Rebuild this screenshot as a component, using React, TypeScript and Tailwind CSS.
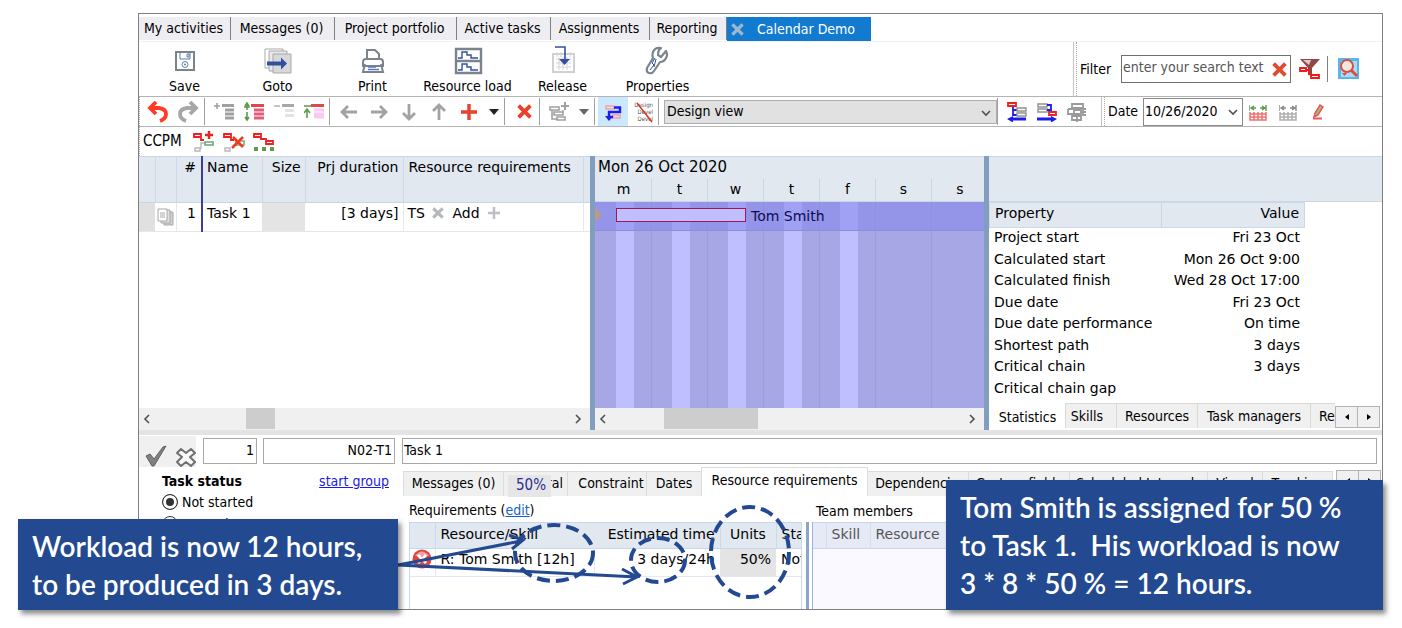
import React from "react";

const mainTabs = [
  { label: "My activities", width: "w-[92px]" },
  { label: "Messages (0)", width: "w-[104px]" },
  { label: "Project portfolio", width: "w-[122px]" },
  { label: "Active tasks", width: "w-[94px]" },
  { label: "Assignments", width: "w-[99px]" },
  { label: "Reporting", width: "w-[77px]" },
];

const stats = [
  ["Project start", "Fri 23 Oct"],
  ["Calculated start", "Mon 26 Oct 9:00"],
  ["Calculated finish", "Wed 28 Oct 17:00"],
  ["Due date", "Fri 23 Oct"],
  ["Due date performance", "On time"],
  ["Shortest path", "3 days"],
  ["Critical chain", "3 days"],
  ["Critical chain gap", ""],
];

const days = ["m", "t", "w", "t", "f", "s", "s"];

interface IconProps {
  size?: number;
  children: React.ReactNode;
}

const Icon: React.FC<IconProps> = ({ size = 20, children }) => (
  <svg
    width={size}
    height={size}
    viewBox={`0 0 ${size} ${size}`}
    fill="none"
    className="shrink-0"
    aria-hidden="true"
  >
    {children}
  </svg>
);

const Sep = () => <div className="w-px self-stretch bg-[#a0a0a0] my-px shrink-0" />;

const Grip = () => (
  <div className="w-1 self-stretch border-l border-[#c4c4c4] shrink-0 flex justify-end">
    <div className="border-l border-dotted border-[#a8a8a8]" />
  </div>
);

const ToolButton: React.FC<{
  label: string;
  active?: boolean;
  children: React.ReactNode;
}> = ({ label, active, children }) => (
  <button
    aria-label={label}
    className={
      active
        ? "w-[30px] h-[29px] shrink-0 flex items-center justify-center bg-[#cce8ff]"
        : "w-[30px] h-[29px] shrink-0 flex items-center justify-center"
    }
  >
    {children}
  </button>
);

const Caret: React.FC<{ color: string }> = ({ color }) => (
  <button aria-label="More" className="w-5 h-[29px] shrink-0 flex items-center justify-center">
    <Icon size={10}>
      <path d="M0 2h10L5 8z" fill={color} />
    </Icon>
  </button>
);

const BigButton: React.FC<{
  label: string;
  first?: boolean;
  children: React.ReactNode;
}> = ({ label, first, children }) => (
  <button
    className={
      first
        ? "w-[91px] flex flex-col items-center whitespace-nowrap pt-1"
        : "w-[95px] flex flex-col items-center whitespace-nowrap pt-1"
    }
  >
    {children}
    <span className="leading-5">{label}</span>
  </button>
);

const Cross: React.FC<{ color: string; size?: number }> = ({ color, size = 14 }) => (
  <svg width={size} height={size} viewBox="0 0 14 14" fill="none" className="shrink-0" aria-hidden="true">
    <path d="M1.5 1.5L12.5 12.5M12.5 1.5L1.5 12.5" stroke={color} strokeWidth="3.600" />
  </svg>
);

const Chevron: React.FC<{ d: string; color?: string }> = ({ d, color = "#505050" }) => (
  <Icon size={10}>
    <path d={d} stroke={color} strokeWidth="1.6" />
  </Icon>
);

const ScrollBar: React.FC<{ children: React.ReactNode }> = ({ children }) => (
  <div className="h-[22px] bg-[#f0f0f0] flex items-center justify-between pl-[3px] pr-[7px] relative">
    <Chevron d="M7 1L3 5L7 9" />
    {children}
    <Chevron d="M3 1L7 5L3 9" />
  </div>
);

const TabArrows = () => (
  <div className="flex h-[22px] w-[45px] shrink-0">
    <button
      aria-label="Scroll tabs left"
      className="flex-1 bg-[#f0f0f0] border border-[#b4b4b4] flex items-center justify-center"
    >
      <Icon size={8}>
        <path d="M6 1v6L2 4z" fill="#000" />
      </Icon>
    </button>
    <button
      aria-label="Scroll tabs right"
      className="flex-1 bg-[#f0f0f0] border border-l-0 border-[#b4b4b4] flex items-center justify-center"
    >
      <Icon size={8}>
        <path d="M2 1v6l4-3z" fill="#000" />
      </Icon>
    </button>
  </div>
);

const MainTabs = () => (
  <nav className="flex h-[25px] mt-[3px] border-b border-[#f2f2f2]">
    {mainTabs.map((tab) => (
      <button
        key={tab.label}
        className={`${tab.width} h-[23px] bg-[#eeeef2] border-r border-[#808080] pr-[2px] whitespace-nowrap shrink-0`}
      >
        {tab.label}
      </button>
    ))}
    <button className="w-[144px] h-6 bg-[#127bd0] text-white flex items-center gap-[13px] pl-1 whitespace-nowrap shrink-0">
      <Cross color="#9db8cc" size={13} />
      Calendar Demo
    </button>
  </nav>
);

const MainToolbar = () => (
  <div className="flex h-[55px] border-b border-[#b4b4b4]">
    <BigButton label="Save" first>
      <Icon size={30}>
        <rect x="6" y="6" width="18" height="18" stroke="#7b838c" strokeWidth="2" />
        <path d="M10 6v7h10V6M17 8v3h2V8z" stroke="#5f78b0" />
        <circle cx="15" cy="18.500" r="3" stroke="#5f78b0" />
        <circle cx="15" cy="18.500" r="1" fill="#5f78b0" />
      </Icon>
    </BigButton>
    <BigButton label="Goto">
      <Icon size={30}>
        <path d="M2 3h18v19H2z" fill="#fff" stroke="#a9a9a9" />
        <path d="M6 5h18v20H6z" fill="#e8e8e8" stroke="#a9a9a9" />
        <path d="M10 8h18v19H10z" fill="#d6d9da" stroke="#a9a9a9" />
        <path d="M4 15.500h14v-4l6 6-6 6v-4H4z" fill="#3350a0" />
      </Icon>
    </BigButton>
    <BigButton label="Print">
      <Icon size={30}>
        <path d="M9 13V4h8l4 4v5" stroke="#7b838c" strokeWidth="2" />
        <path d="M7 20H5v-4q0-3 3-3h14q3 0 3 3v4H5" stroke="#7b838c" strokeWidth="2" />
        <path d="M7 18l-2 8h20l-2-8" stroke="#7b838c" strokeWidth="2" />
        <path d="M10 21h8M10 23.500h11" stroke="#5f78c0" strokeWidth="1.500" />
      </Icon>
    </BigButton>
    <BigButton label="Resource load">
      <Icon size={30}>
        <path d="M3 3h25v24H3zM3 15h25" stroke="#7b838c" strokeWidth="2.400" />
        <path
          d="M5 12h4V6h5v3h4v3h7M5 24h4v-6h5v3h4v3h7"
          stroke="#3350a0"
          strokeWidth="1.400"
        />
      </Icon>
    </BigButton>
    <BigButton label="Release">
      <Icon size={30}>
        <path d="M5 8h21v18H5z" fill="#fff" stroke="#d0d0d0" strokeWidth="2" />
        <path d="M8 13h15M8 17h15M8 21h15M11 11v13M15 11v13M19 11v13M9 6v5M13 6v5M22 6v5" stroke="#d4d4d4" />
        <path d="M7 1h10v13" stroke="#3350a0" strokeWidth="1.600" />
        <path d="M11 13h11l-5.500 6z" fill="#3350a0" />
      </Icon>
    </BigButton>
    <BigButton label="Properties">
      <Icon size={30}>
        <path
          d="M18 2q-6-1-8 4-1 3 0 6l-6 10q-1 4 2 5 3 1 5-2l6-9q4 0 6-4 2-3 0-7l-5 6-3-2q0-5 3-7z"
          stroke="#7b838c"
          strokeWidth="2.200"
          strokeLinejoin="round"
        />
        <path d="M12 12l-3 5 2 2-4 5M13 13l-2 8" stroke="#3350a0" />
      </Icon>
    </BigButton>
    <div className="flex-1" />
    <Grip />
    <div className="flex items-center w-[305px] shrink-0">
      <label htmlFor="filter" className="w-[44px] pl-[3px]">
        Filter
      </label>
      <div className="w-[170px] h-[28px] border border-[#707070] flex items-center">
        <input
          id="filter"
          placeholder="enter your search text"
          className="w-[150px] pl-px pb-1 outline-none placeholder:text-[#555555]"
        />
        <Cross color="#e04b32" size={15} />
      </div>
      <button aria-label="Apply filter" className="ml-2 flex">
        <Icon size={22}>
          <path d="M1 1h20l-8 9v9l-4-3v-6z" fill="#8b4a4a" />
          <path d="M4 2h8l-2 5z" fill="#e8c4c4" />
          <path d="M1 10h6v3H1zM12 17h8v3h-8z" fill="#fff" />
          <path d="M1 10h6v3H1zM12 17h8v3h-8zM7 12h3v5" stroke="#f01818" strokeWidth="1.800" />
        </Icon>
      </button>
      <div className="w-px h-[26px] bg-[#808080] ml-[6px]" />
      <button aria-label="Search" className="ml-[10px] flex">
        <Icon size={22}>
          <path d="M0 0h21v21H0z" fill="#5cb4ea" />
          <path d="M3 3h16v16H3z" fill="#a9dcf8" />
          <circle cx="9" cy="8" r="6" fill="#f6e6e0" stroke="#d8503e" strokeWidth="2" />
          <path d="M13 12l6 6" stroke="#d8503e" strokeWidth="3" />
          <path d="M4 15h5l-2.500 3z" fill="#d8503e" />
        </Icon>
      </button>
    </div>
  </div>
);

const OutlineToolbar = () => (
  <div className="flex items-center h-[30px] border-b border-[#b4b4b4]">
    <div className="w-1 shrink-0 self-stretch border-l border-dotted border-[#a8a8a8]" />
    <ToolButton label="Undo">
      <Icon size={22}>
        <path d="M9 1L3 7l6 6M3 7h9q7 1 7 6 0 5-6 7" stroke="#ff3b24" strokeWidth="3.800" />
      </Icon>
    </ToolButton>
    <ToolButton label="Redo">
      <Icon size={22}>
        <path d="M13 1l6 6-6 6M19 7h-9q-7 1-7 6 0 5 6 7" stroke="#a6a6a6" strokeWidth="3.800" />
      </Icon>
    </ToolButton>
    <div className="w-px" />
    <Sep />
    <div className="w-1 shrink-0" />
    <ToolButton label="Insert task">
      <Icon>
        <path d="M0 4h6M3 1v6" stroke="#a0a0a0" strokeWidth="1.600" />
        <path d="M8 3.500h12M11 8h9M11 12h9M11 16h9" stroke="#a0a0a0" strokeWidth="3" />
      </Icon>
    </ToolButton>
    <ToolButton label="Expand all">
      <Icon>
        <path d="M3 2v6M0 5h6M3 10v8M1 15l2 3 2-3M1 4l2-3 2 3" stroke="#5b9a4b" strokeWidth="1.600" />
        <path d="M7 3.500h13" stroke="#e04848" strokeWidth="3" />
        <path d="M10 8h10M10 12h10M10 16h10" stroke="#e85a78" strokeWidth="3" />
      </Icon>
    </ToolButton>
    <ToolButton label="Collapse">
      <Icon>
        <path d="M0 4h6" stroke="#b8b8b8" strokeWidth="1.600" />
        <path d="M8 3.500h12" stroke="#a8a8a8" strokeWidth="3" />
        <path d="M11 8.500h9M11 13.500h9" stroke="#e4e4e4" strokeWidth="3" />
      </Icon>
    </ToolButton>
    <ToolButton label="Move up level">
      <Icon>
        <path d="M0 4h7M3 8v8M0 11l3-4 3 4" stroke="#5b9a4b" strokeWidth="1.600" />
        <path d="M7 3.500h13" stroke="#e04848" strokeWidth="3" />
        <path d="M10 8h10M10 12h10M10 15h10" stroke="#fbc8f4" strokeWidth="3" />
      </Icon>
    </ToolButton>
    <Sep />
    <div className="w-1 shrink-0" />
    <ToolButton label="Left">
      <Icon>
        <path d="M18 10H3M9 4l-6 6 6 6" stroke="#a3a3a3" strokeWidth="2.800" />
      </Icon>
    </ToolButton>
    <ToolButton label="Right">
      <Icon>
        <path d="M2 10h15M11 4l6 6-6 6" stroke="#a3a3a3" strokeWidth="2.800" />
      </Icon>
    </ToolButton>
    <ToolButton label="Down">
      <Icon>
        <path d="M10 2v15M4 11l6 6 6-6" stroke="#a3a3a3" strokeWidth="2.800" />
      </Icon>
    </ToolButton>
    <ToolButton label="Up">
      <Icon>
        <path d="M10 18V3M4 9l6-6 6 6" stroke="#a3a3a3" strokeWidth="2.800" />
      </Icon>
    </ToolButton>
    <ToolButton label="Add">
      <Icon>
        <path d="M10 2v16M2 10h16" stroke="#e8412c" strokeWidth="3.400" />
      </Icon>
    </ToolButton>
    <Caret color="#222" />
    <Sep />
    <div className="w-1 shrink-0" />
    <ToolButton label="Delete">
      <Cross color="#e8412c" size={15} />
    </ToolButton>
    <Sep />
    <div className="w-1 shrink-0" />
    <ToolButton label="Add link">
      <Icon>
        <path d="M1 5h9v3H1zM5 10h9v3H5zM8 15h8v3H8zM3 8v9h5M14 8v3" stroke="#a0a0a0" strokeWidth="1.600" />
        <path d="M16 0v8M12 4h8" stroke="#a0a0a0" strokeWidth="2" />
      </Icon>
    </ToolButton>
    <Caret color="#666" />
    <Sep />
    <div className="w-[3px] shrink-0" />
    <ToolButton label="Dependencies" active>
      <Icon>
        <path d="M3 4h8v3H3zM10 13h7v3h-7z" stroke="#f8a0a0" strokeWidth="1.600" />
        <path d="M11 5.500h6v4.500H6v5h4" stroke="#1c1cf0" strokeWidth="2.400" />
        <path d="M2 14h8l-4 5z" fill="#1c1cf0" />
      </Icon>
    </ToolButton>
    <ToolButton label="Hide details">
      <svg width="22" height="22" viewBox="0 0 22 22" aria-hidden="true">
        <g fontSize="6" fill="#555555" textAnchor="end">
          <text x="21" y="6">Design</text>
          <text x="21" y="13">Devel</text>
          <text x="21" y="20">Devel</text>
        </g>
        <path d="M5 2L20 21" stroke="#e03020" strokeWidth="1.500" />
      </svg>
    </ToolButton>
    <Sep />
    <div className="relative flex-1 min-w-0 h-[24px] ml-[5px]">
      <select
        aria-label="View"
        className="appearance-none w-full h-full bg-[#e1e1e1] border border-[#adadad] pl-[2px] outline-none"
      >
        <option>Design view</option>
      </select>
      <div className="absolute right-[6px] top-2 pointer-events-none">
        <Chevron d="M1 3L5 7L9 3" />
      </div>
    </div>
    <Sep />
    <div className="w-1 shrink-0" />
    <ToolButton label="Predecessors">
      <Icon>
        <path d="M6 5v8h4M6 8h4" stroke="#1c1cf0" strokeWidth="1.800" />
        <path d="M1 1h8v3H1z" stroke="#f02020" strokeWidth="1.800" />
        <path d="M10 6h9v3h-9zM10 11h9v3h-9z" stroke="#909090" strokeWidth="1.400" />
        <path d="M19 15.500v3H6v2L0 17l6-3v1.500z" fill="#1c1cf0" />
      </Icon>
    </ToolButton>
    <ToolButton label="Successors">
      <Icon>
        <path d="M1 2h9v3H1zM1 7h9v3H1z" stroke="#909090" strokeWidth="1.400" />
        <path d="M10 3h4v8M10 8h4" stroke="#1c1cf0" strokeWidth="1.800" />
        <path d="M12 10h7v3h-7z" stroke="#f02020" strokeWidth="1.800" />
        <path d="M0 15.500v3h14v2l6-3.500-6-3v1.500z" fill="#1c1cf0" />
      </Icon>
    </ToolButton>
    <ToolButton label="Network">
      <Icon>
        <path
          d="M5 2h11v4H5zM7 8h7v4H7zM5 14h9v4H5zM1 7h4V4M19 7h-3v6h3M1 7v5h4v3M1 12h6M14 10h5M10 12v8"
          stroke="#9a9a9a"
          strokeWidth="1.800"
        />
      </Icon>
    </ToolButton>
    <div className="w-[9px] shrink-0" />
    <Grip />
    <label htmlFor="date" className="w-[38px] shrink-0 pl-[3px]">
      Date
    </label>
    <div className="relative w-[100px] h-[28px] shrink-0">
      <select
        id="date"
        className="appearance-none w-full h-full bg-white border border-[#8a8a8a] pl-px outline-none"
      >
        <option>10/26/2020</option>
      </select>
      <div className="absolute right-[5px] top-[9px] pointer-events-none">
        <Chevron d="M1 3L5 7L9 3" />
      </div>
    </div>
    <ToolButton label="Fit calendar">
      <Icon size={18}>
        <path d="M1 9v8h16V9M1 11h16M1 14h16M5 9v8M9 9v8M13 9v8" stroke="#f07070" strokeWidth="1.500" />
        <path d="M0 2v6M17 2v6M2 5h5M11 5h5M5 3L2 5l3 2M13 3l3 2-3 2" stroke="#5b9a4b" strokeWidth="1.400" />
      </Icon>
    </ToolButton>
    <ToolButton label="Calendar range">
      <Icon size={18}>
        <path d="M1 9v8h16V9M1 11h16M1 14h16M5 9v8M9 9v8M13 9v8" stroke="#b0b0b0" strokeWidth="1.500" />
        <path d="M0 2v6M17 2v6M2 5h5M11 5h5M5 3L2 5l3 2M13 3l3 2-3 2" stroke="#888888" strokeWidth="1.400" />
      </Icon>
    </ToolButton>
    <ToolButton label="Edit">
      <Icon size={18}>
        <path d="M5 14l1-4 5-8 3 2-5 8z" fill="#8dc870" stroke="#f05060" strokeWidth="1.500" />
        <path d="M4 15.500h9" stroke="#f05060" strokeWidth="2" />
      </Icon>
    </ToolButton>
    <div className="w-[49px] shrink-0" />
  </div>
);

const CcpmBar = () => (
  <div className="flex items-center h-[29px]">
    <div className="w-1 shrink-0 self-stretch border-l border-dotted border-[#a8a8a8]" />
    <span className="w-[46px] text-[15px]">CCPM</span>
    <ToolButton label="Add chain">
      <Icon size={22}>
        <path d="M1 3h7v3H1zM8 5v4h3" stroke="#f02020" strokeWidth="1.800" />
        <path d="M16 0v8M12 4h8" stroke="#f02020" strokeWidth="2.400" />
        <path d="M12 11h8v3h-8z" stroke="#6aa67a" strokeWidth="1.600" />
        <path d="M11 12H8v5H2v3h5v-3" stroke="#b8b8b8" strokeWidth="1.400" />
      </Icon>
    </ToolButton>
    <ToolButton label="Remove chain">
      <Icon size={22}>
        <path d="M1 3h7v3H1zM8 5v4h3" stroke="#f02020" strokeWidth="1.800" />
        <path d="M13 10h8v4h-8z" stroke="#8aa67a" strokeWidth="1.600" />
        <path d="M10 6l10 10M20 6L9 17" stroke="#f03a20" strokeWidth="2.600" />
        <path d="M2 17h5v3H2z" stroke="#b8b8b8" strokeWidth="1.400" />
      </Icon>
    </ToolButton>
    <ToolButton label="Chain buffers">
      <Icon size={22}>
        <path d="M1 3h7v3H1zM8 5v3h5v3M13 10h7v3h-7z" stroke="#f02020" strokeWidth="1.800" />
        <path d="M1 16h4v4H1zM9 16h4v4H9zM17 16h4v4h-4z" fill="#5f9a50" />
      </Icon>
    </ToolButton>
  </div>
);

const TaskGrid = () => (
  <div className="w-[451px] shrink-0 flex flex-col overflow-hidden">
    <table className="table-fixed w-[451px] border-collapse leading-5 font-['DejaVu_Sans',sans-serif]">
      <thead>
        <tr className="h-[46px] align-top bg-[#e1e8f0] border-y border-[#c8d6e6]">
          <th className="w-4 border-r border-[#ccd9e6]" />
          <th className="w-[21px] border-r border-[#ccd9e6]" />
          <th className="w-[26px] border-r-2 border-r-[#3c3c9c] font-normal text-right pr-[5px]">#</th>
          <th className="w-[60px] border-r border-[#ccd9e6] font-normal text-left pl-1">Name</th>
          <th className="w-[43px] border-r border-[#ccd9e6] font-normal text-right pr-1">Size</th>
          <th className="w-[98px] border-r border-[#ccd9e6] font-normal text-right pr-1 whitespace-nowrap">
            Prj duration
          </th>
          <th className="w-[180px] border-r border-[#ccd9e6] font-normal text-left pl-[5px] whitespace-nowrap">
            Resource requirements
          </th>
          <th />
        </tr>
      </thead>
      <tbody>
        <tr className="h-[28px] border-b border-[#e6e6f0]">
          <td className="bg-[#e0e0e0]" />
          <td className="border-r border-[#e6e6f0] pl-[2px]">
            <Icon size={18}>
              <path d="M7 4h9v13H7z" fill="#d0d0d0" stroke="#a8a8a8" />
              <path d="M4 2h9v13H4z" fill="#e0e0e0" stroke="#a8a8a8" />
              <path d="M1 1h9v12H1z" fill="#fff" stroke="#a8a8a8" />
              <path d="M3 5h5M3 7h5M3 9h5" stroke="#a8a8a8" />
            </Icon>
          </td>
          <td className="border-r-2 border-r-[#3c3c9c] text-right pr-[5px] pb-2">1</td>
          <td className="pl-1 pb-2">Task 1</td>
          <td className="bg-[#e4e4e4]" />
          <td className="text-right pr-1 pb-2 border-r border-[#e6e6f0]">[3 days]</td>
          <td className="pl-1 pb-2 border-r border-[#e6e6f0]">
            <div className="flex items-center">
              <span className="w-[24px]">TS</span>
              <Cross color="#b4b8bc" size={12} />
              <span className="ml-[9px] mr-[7px]">Add</span>
              <Icon size={14}>
                <path d="M7 1v12M1 7h12" stroke="#bcc0c4" strokeWidth="2.500" />
              </Icon>
            </div>
          </td>
          <td />
        </tr>
      </tbody>
    </table>
    <div className="flex-1" />
    <ScrollBar>
      <div className="absolute left-[107px] top-0 h-[21px] w-[29px] bg-[#cdcdcd]" />
    </ScrollBar>
  </div>
);

const Gantt = () => (
  <div className="flex-1 min-w-0 flex flex-col overflow-hidden font-['DejaVu_Sans',sans-serif]">
    <div className="h-[46px] bg-[#e1e8f0] border-y border-[#c8d6e6]">
      <div className="pl-[3px] h-[22px] leading-5 text-[15px]">Mon 26 Oct 2020</div>
      <div className="flex h-[22px] pl-px">
        {days.map((day, idx) => (
          <div
            key={idx}
            className="w-[56px] shrink-0 border-r border-[#c8d6e6] last:border-r-0 text-center leading-5"
          >
            {day}
          </div>
        ))}
      </div>
    </div>
    <div className="flex-1 bg-[#a7a7e6] relative flex overflow-hidden pl-px">
      {days.map((day, idx) => (
        <div key={idx} className="w-[56px] shrink-0 border-r border-[#9c9ce2] last:border-r-0 pl-5">
          {idx < 5 && <div className="w-[18px] h-full bg-[#bfbfff]" />}
        </div>
      ))}
      <div className="absolute inset-x-0 top-0 h-[29px] bg-[#8282ea]/50 border-b border-[#8c8ce0]" />
      <div className="absolute left-[21px] top-[6px] w-[130px] h-[14px] bg-[#bfbfff] border border-[#a01850]" />
      <div className="absolute left-[156px] top-1 leading-5 text-[#0c0c50]">Tom Smith</div>
      <svg className="absolute left-0 top-[6px]" width="7" height="14" viewBox="0 0 7 14" aria-hidden="true">
        <path d="M0 0l7 7-7 7z" fill="#b89c88" />
      </svg>
    </div>
    <ScrollBar>
      <div className="absolute left-[69px] top-0 h-[21px] w-[94px] bg-[#cdcdcd]" />
    </ScrollBar>
  </div>
);

const StatsPanel = () => (
  <div className="w-[393px] shrink-0 flex flex-col">
    <div className="h-[46px] bg-[#e1e8f0] border-y border-[#c8d6e6]" />
    <table className="table-fixed w-[316px] leading-5 font-['DejaVu_Sans',sans-serif]">
      <thead>
        <tr className="h-[25px] bg-[#e1e8f0] border border-[#ccd9e6]">
          <th className="w-[172px] font-normal text-left pl-[5px] pb-1 border-r border-[#c8d6e6]">
            Property
          </th>
          <th className="font-normal text-right pr-[5px] pb-1">Value</th>
        </tr>
      </thead>
    </table>
    <table className="table-fixed w-[316px] h-[172px] leading-[18px] font-['DejaVu_Sans',sans-serif]">
      <tbody>
        {stats.map(([name, value]) => (
          <tr key={name}>
            <td className="w-[172px] pl-[5px] pb-[3px] whitespace-nowrap">{name}</td>
            <td className="text-right pr-[5px] pb-[3px] whitespace-nowrap">{value}</td>
          </tr>
        ))}
      </tbody>
    </table>
    <div className="flex-1" />
    <div className="flex h-[27px] shrink-0 pl-px pr-[2px]">
      <button className="w-[75px] pt-px">Statistics</button>
      <div className="flex-1 min-w-0 flex bg-[#f0f0f0] border-t border-[#d9d9d9] h-[25px] overflow-hidden whitespace-nowrap">
        <button className="w-[52px] shrink-0 pr-2 border-x border-[#d9d9d9]">Skills</button>
        <button className="w-[81px] shrink-0 border-r border-[#d9d9d9]">Resources</button>
        <button className="w-[113px] shrink-0 border-r border-[#d9d9d9]">Task managers</button>
        <button className="shrink-0 pl-2">Reports</button>
      </div>
      <div className="pt-[3px]">
        <TabArrows />
      </div>
    </div>
  </div>
);

const Splitter = () => <div className="w-[5px] shrink-0 bg-[#829ebf]" />;

const DetailTabs = () => (
  <div className="flex h-[29px] pr-px whitespace-nowrap">
    <div className="flex-1 min-w-0 flex items-end overflow-hidden">
      <button className="w-[101px] h-[25px] pb-[2px] shrink-0 bg-[#f0f0f0] border-t border-x border-[#dcdcdc]">
        Messages (0)
      </button>
      <button className="w-[64px] h-[25px] pb-[2px] shrink-0 bg-[#f0f0f0] border-t border-r border-[#dcdcdc] text-right pr-1 overflow-hidden">
        General
      </button>
      <button className="w-[79px] h-[25px] pb-[2px] shrink-0 bg-[#f0f0f0] border-t border-r border-[#dcdcdc] pl-2">
        Constraint
      </button>
      <button className="w-[54px] h-[25px] pb-[2px] shrink-0 bg-[#f0f0f0] border-t border-[#dcdcdc]">Dates</button>
      <button className="w-[167px] h-[29px] pb-1 shrink-0 bg-white border-t border-x border-[#dcdcdc]">
        Resource requirements
      </button>
      <button className="w-[101px] h-[25px] pb-[2px] pl-1 shrink-0 bg-[#f0f0f0] border-t border-r border-[#dcdcdc]">
        Dependencies
      </button>
      <button className="w-[101px] h-[25px] pb-[2px] shrink-0 bg-[#f0f0f0] border-t border-r border-[#dcdcdc]">
        Custom fields
      </button>
      <button className="w-[138px] h-[25px] pb-[2px] shrink-0 bg-[#f0f0f0] border-t border-r border-[#dcdcdc]">
        Scheduled Intervals
      </button>
      <button className="w-[55px] h-[25px] pb-[2px] shrink-0 bg-[#f0f0f0] border-t border-r border-[#dcdcdc]">
        Visual
      </button>
      <button className="w-[70px] h-[25px] pb-[2px] shrink-0 bg-[#f0f0f0] border-t border-r border-[#dcdcdc]">
        Tracking
      </button>
    </div>
    <div className="pt-[3px]">
      <TabArrows />
    </div>
  </div>
);

const Requirements = () => (
  <div className="w-[400px] shrink-0 pl-[6px]">
    <div className="h-[26px] leading-7">
      Requirements (
      <a href="#edit" className="text-[#1464c8] underline">
        edit
      </a>
      )
    </div>
    <div className="w-[393px] h-[90px] overflow-hidden border-x border-[#c8d6ee] font-['DejaVu_Sans',sans-serif]">
      <table className="table-fixed w-[430px] leading-[18px] border-collapse">
        <thead>
          <tr className="h-[26px] bg-[#e1e8f0] border-y border-[#c8d6ee]">
            <th className="w-[25px] border-r border-[#ccd9e6]" />
            <th className="w-[159px] font-normal text-left pl-[5px] pb-1">Resource/Skill</th>
            <th className="w-[126px] font-normal text-right pr-[5px] pb-1 border-r border-[#ccd9e6] whitespace-nowrap">
              Estimated time
            </th>
            <th className="w-[56px] font-normal pb-1 border-r border-[#ccd9e6]">Units</th>
            <th className="font-normal text-left pl-[5px] pb-1">Status</th>
          </tr>
        </thead>
        <tbody>
          <tr className="h-[28px] border-b border-[#e6e6f4] align-top">
            <td className="border-r border-[#e6e6f4] pl-[2px]">
              <Icon>
                <circle cx="10" cy="10" r="9.500" fill="#e04444" />
                <path d="M3 7q7-9 14 0z" fill="#f6a0a0" />
                <path d="M6 6l8 8M14 6l-8 8" stroke="#fff" strokeWidth="3" />
              </Icon>
            </td>
            <td className="pl-[5px] pt-px border-r border-[#e6e6f4] whitespace-nowrap">R: Tom Smith [12h]</td>
            <td className="text-right pr-[5px] pt-px">3 days/24h</td>
            <td className="bg-[#e4e4e4] text-right pr-[5px] pt-px">50%</td>
            <td className="pl-[5px] pt-px whitespace-nowrap">Not started</td>
          </tr>
        </tbody>
      </table>
    </div>
  </div>
);

const TeamMembers = () => (
  <div className="flex-1 min-w-0 pl-[3px]">
    <div className="h-[26px] leading-[30px] pl-1">Team members</div>
    <div className="h-[90px] bg-[#f9f9ff] border-l border-[#9cb4dc] font-['DejaVu_Sans',sans-serif]">
      <table className="table-fixed w-full leading-[18px] text-[#555555]">
        <thead>
          <tr className="h-[26px] bg-[#e6eaf6] border-y border-[#c8d6ee]">
            <th className="w-[13px] border-r border-[#d6deee]" />
            <th className="w-[44px] font-normal text-left pl-[5px] pb-1 border-r border-[#d6deee]">Skill</th>
            <th className="font-normal text-left pl-[5px] pb-1">Resource</th>
          </tr>
        </thead>
      </table>
    </div>
  </div>
);

const TaskDetails = () => (
  <section className="h-[174px] overflow-hidden">
    <div className="flex h-8 pt-px">
      <div className="w-[57px] h-[31px] shrink-0 bg-[#f0f0f0] flex items-end gap-[9px] pl-[6px]">
        <button aria-label="Accept">
          <Icon size={22}>
            <path d="M1 11l4-2 4 5L18 2l3-1L9 21H7z" fill="#808080" stroke="#606060" />
          </Icon>
        </button>
        <button aria-label="Cancel">
          <Icon size={20}>
            <path
              d="M5 2l5 4 5-4 4 4-5 4 5 5-4 4-5-4-5 4-4-4 5-5-5-4z"
              fill="#f8f8f8"
              stroke="#707070"
              strokeWidth="2"
              strokeLinejoin="round"
            />
          </Icon>
        </button>
      </div>
      <input
        aria-label="Task number"
        defaultValue="1"
        className="w-[54px] h-[26px] mt-[2px] ml-[7px] shrink-0 border border-[#a8a8a8] text-right pr-[2px] pb-[2px] outline-none"
      />
      <input
        aria-label="Task code"
        defaultValue="N02-T1"
        className="w-[132px] h-[26px] mt-[2px] ml-[6px] shrink-0 border border-[#a8a8a8] text-right pr-[2px] pb-[2px] outline-none"
      />
      <input
        aria-label="Task name"
        defaultValue="Task 1"
        className="flex-1 min-w-0 h-[26px] mt-[2px] ml-[7px] mr-[5px] border border-[#a8a8a8] pl-px pb-[2px] outline-none"
      />
    </div>
    <div className="flex">
      <div className="w-[264px] shrink-0 pl-[23px] pt-1">
        <div className="flex justify-between pr-[14px] leading-5">
          <span className="font-bold">Task status</span>
          <a href="#start-group" className="text-[#1a1ae8] underline">
            start group
          </a>
        </div>
        <label className="flex items-center gap-1 h-[22px]">
          <input
            type="radio"
            name="status"
            defaultChecked
            className="appearance-none w-4 h-4 rounded-full border border-[#333333] bg-[#333333] shadow-[inset_0_0_0_3px_white]"
          />
          Not started
        </label>
        <label className="flex items-center gap-1 h-[22px]">
          <input
            type="radio"
            name="status"
            className="appearance-none w-4 h-4 rounded-full border border-[#333333]"
          />
          Started
        </label>
      </div>
      <div className="flex-1 min-w-0">
        <DetailTabs />
        <div className="flex">
          <Requirements />
          <div className="w-[6px] shrink-0 h-[90px] mt-[26px] pl-[3px]">
            <div className="w-[3px] h-full bg-[#8ba6c8]" />
          </div>
          <TeamMembers />
        </div>
      </div>
    </div>
  </section>
);

const Annotations = () => (
  <>
    <div className="absolute left-[508px] top-[475px] w-[43px] h-[22px] bg-[#e6e6e8] text-[#2c2c90] text-[15px] leading-5 pl-2">
      50%
    </div>
    <svg
      className="absolute left-[390px] top-[490px] pointer-events-none"
      width="420"
      height="120"
      viewBox="390 490 420 120"
      fill="none"
      stroke="#234a90"
      aria-hidden="true"
    >
      <g strokeWidth="4" strokeDasharray="13 6">
        <ellipse cx="554" cy="553" rx="39" ry="28" />
        <ellipse cx="658" cy="560" rx="27" ry="22" />
        <ellipse cx="750" cy="552" rx="39" ry="45" />
      </g>
      <path d="M398 565L521 541M509 535l14 5-11 9M398 565L637 577M622 569l15 8-14 7" strokeWidth="3" />
    </svg>
    <div className="absolute left-[18px] top-[519px] w-[380px] h-[91px] bg-[#234a90] shadow-[3px_4px_5px_rgba(0,0,0,0.45)] text-white text-[28px] leading-[38px] pl-[14px] pt-2 font-semibold font-['Lato',sans-serif] whitespace-pre">
      {"Workload is now 12 hours,\nto be produced in 3 days."}
    </div>
    <div className="absolute left-[946px] top-[480px] w-[437px] h-[130px] bg-[#234a90] shadow-[3px_4px_5px_rgba(0,0,0,0.45)] text-white text-[28px] leading-[38px] pl-[14px] pt-2 font-semibold font-['Lato',sans-serif] whitespace-pre">
      {"Tom Smith is assigned for 50 %\nto Task 1.  His workload is now\n3 * 8 * 50 % = 12 hours."}
    </div>
  </>
);

const App: React.FC = () => {
  return (
    <div className="relative bg-white text-black text-[14px] font-['DejaVu_Sans_Condensed','Noto_Sans',sans-serif] pl-[138px] pr-[19px] pt-[13px] pb-[18px]">
      <main className="border border-[#808080]">
        <MainTabs />
        <MainToolbar />
        <OutlineToolbar />
        <CcpmBar />
        <section className="flex h-[274px]">
          <TaskGrid />
          <Splitter />
          <Gantt />
          <Splitter />
          <StatsPanel />
        </section>
        <div className="h-[5px] bg-[#e4e4e4]" />
        <TaskDetails />
      </main>
      <Annotations />
    </div>
  );
};

export default App;
